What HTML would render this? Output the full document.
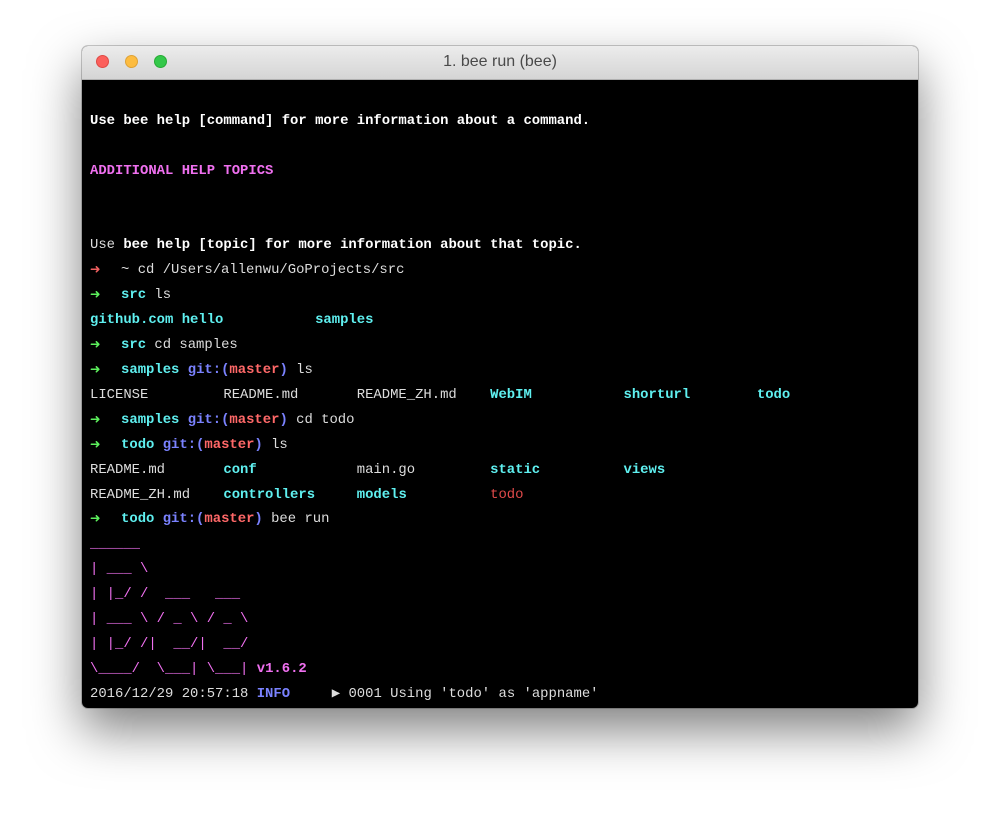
<!DOCTYPE html>
<html><head><meta charset="utf-8"><style>
html,body{margin:0;padding:0;background:#fff;width:1000px;height:826px;overflow:hidden}
.win{position:absolute;left:82px;top:46px;width:836px;height:662px;border-radius:6px;overflow:hidden;box-shadow:0 22px 50px rgba(0,0,0,.5),0 0 0 1px rgba(0,0,0,.2);background:#000}
.tb{position:absolute;left:0;top:0;width:836px;height:34px;background:linear-gradient(#ececec,#d5d5d5);border-bottom:1px solid #b0b0b0;box-sizing:border-box}
.dot{position:absolute;top:9px;width:13px;height:13px;border-radius:50%;box-sizing:border-box}
.title{position:absolute;left:0;right:0;top:7px;text-align:center;font:16px "Liberation Sans",sans-serif;color:#4a4a4a}
pre{position:absolute;left:8px;top:38px;margin:0;font-family:"Liberation Mono",monospace;font-size:13.9px;line-height:24.9px;color:#ddd;white-space:pre}
.w{color:#fff;font-weight:bold}.m{color:#f070f0}.mb{color:#f070f0;font-weight:bold}
.c{color:#5ff0f0;font-weight:bold}.g{color:#5df05d;font-weight:bold}.r{color:#f06060;font-weight:bold}
.bl{color:#7a82ff;font-weight:bold}.rm{color:#ff6868;font-weight:bold}.rd{color:#e04a4a}
.a{display:inline-block;width:22.7px;font-size:17px;line-height:10px;position:relative;top:2px}
</style></head><body>
<div class="win">
<div class="tb">
<div class="dot" style="left:13.5px;background:#fc605c;border:1px solid #de4a45"></div>
<div class="dot" style="left:42.5px;background:#fdbc40;border:1px solid #dea236"></div>
<div class="dot" style="left:71.5px;background:#34c84a;border:1px solid #27aa35"></div>
<div class="title">1. bee run (bee)</div>
</div>
<pre>

<span class="w">Use bee help [command] for more information about a command.</span>

<span class="mb">ADDITIONAL HELP TOPICS</span>


Use <span class="w">bee help [topic] for more information about that topic.</span>
<span class="r a">➜</span> ~ cd /Users/allenwu/GoProjects/src
<span class="g a">➜</span> <span class="c">src</span> ls
<span class="c">github.com hello           samples</span>
<span class="g a">➜</span> <span class="c">src</span> cd samples
<span class="g a">➜</span> <span class="c">samples</span> <span class="bl">git:(</span><span class="rm">master</span><span class="bl">)</span> ls
LICENSE         README.md       README_ZH.md    <span class="c">WebIM</span>           <span class="c">shorturl</span>        <span class="c">todo</span>
<span class="g a">➜</span> <span class="c">samples</span> <span class="bl">git:(</span><span class="rm">master</span><span class="bl">)</span> cd todo
<span class="g a">➜</span> <span class="c">todo</span> <span class="bl">git:(</span><span class="rm">master</span><span class="bl">)</span> ls
README.md       <span class="c">conf</span>            main.go         <span class="c">static</span>          <span class="c">views</span>
README_ZH.md    <span class="c">controllers</span>     <span class="c">models</span>          <span class="rd">todo</span>
<span class="g a">➜</span> <span class="c">todo</span> <span class="bl">git:(</span><span class="rm">master</span><span class="bl">)</span> bee run
<span class="m">______
| ___ \
| |_/ /  ___   ___
| ___ \ / _ \ / _ \
| |_/ /|  __/|  __/
\____/  \___| \___|</span> <span class="mb">v1.6.2</span>
2016/12/29 20:57:18 <span class="bl">INFO</span>     ▶ 0001 Using 'todo' as 'appname'
</pre>
</div>
</body></html>
